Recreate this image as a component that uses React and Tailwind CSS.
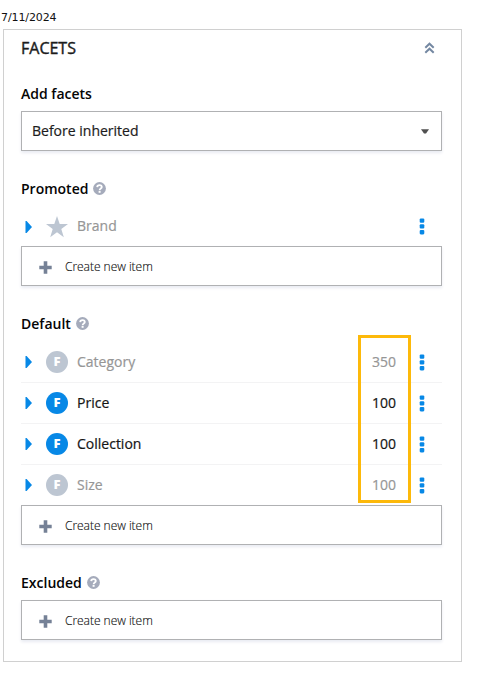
import React from "react";

function Help() {
  return (
    <svg className="mb-[2px] ml-[5px] h-[13px] w-[13px] shrink-0" viewBox="0 0 13 13">
      <circle cx="6.5" cy="6.5" r="6.4" fill="#a5abbb" />
      <path d="M4.2 5.1C4.3 2.4 8.8 2.5 8.8 5.1C8.8 6.6 6.6 6.5 6.6 8.2" fill="none" stroke="#fff" strokeWidth="1.8" />
      <rect x="5.6" y="9" width="2" height="1.8" fill="#fff" />
    </svg>
  );
}

function Heading({ children, help }) {
  return (
    <div className="flex h-5 items-center text-[14px] leading-5 font-semibold text-[#050505]">
      <span>{children}</span>
      {help && <Help />}
    </div>
  );
}

function CreateItem() {
  return (
    <div className="flex h-10 items-center border border-[#b0b1b3] pl-[17px] shadow-[0_2px_3px_#e9ebf2]">
      <svg className="mt-[3px] h-[13px] w-[13px]" viewBox="0 0 13 13">
        <path d="M6.5 0.3V12.7M0.3 6.5H12.7" stroke="#758196" strokeWidth="3.6" />
      </svg>
      <span className="mt-[2px] ml-[13px] text-[12px] font-light tracking-[-0.03px] text-[#111] [-webkit-text-stroke:0.15px_#111]">
        Create new item
      </span>
    </div>
  );
}

function Row({ name, value, muted, star, line }) {
  const tone = muted
    ? "text-[#969696] [-webkit-text-stroke:0.2px_#969696]"
    : "text-[#151515] [-webkit-text-stroke:0.2px_#151515]";
  return (
    <div className={"flex items-center " + (star ? "h-10 pt-px" : line ? "h-[41px] border-b border-[#f3f3f4]" : "h-10")}>
      <svg className="ml-1 h-3 w-[7px]" viewBox="0 0 7 12">
        <path d="M0.5 0H1.6L7 6L1.6 12H0.5Z" fill="#0788e6" />
      </svg>
      <div className="ml-[14px] flex w-[22px] justify-center">
        {star ? (
          <svg className="h-[22px] w-[22px]" viewBox="0 0 22 22">
            <path d="M11 0L13.7 8H22L15.3 13L17.8 21.3L11 16.3L4.2 21.3L6.7 13L0 8H8.3Z" fill="#bdc6d2" />
          </svg>
        ) : (
          <div className={"flex h-[22px] w-[22px] items-center justify-center rounded-full text-[13px] font-extrabold text-white " + (muted ? "bg-[#bdc6d2]" : "bg-[#0788e6]")}>
            F
          </div>
        )}
      </div>
      <span className={"mb-[2px] ml-[9px] flex-1 text-[14px] " + tone}>{name}</span>
      <span className={"mb-[2px] text-[14px] " + tone}>{value}</span>
      <svg className="mr-[17px] ml-[23px] h-[17px] w-[6px]" viewBox="0 0 6 17">
        <rect x="0.7" y="0.4" width="4.6" height="4.4" rx="1.1" fill="#0788e6" />
        <rect x="0.7" y="6.2" width="4.6" height="4.4" rx="1.1" fill="#0788e6" />
        <rect x="0.7" y="12" width="4.6" height="4.4" rx="1.1" fill="#0788e6" />
      </svg>
    </div>
  );
}

export default function App() {
  return (
    <div className="h-[682px] w-[478px] overflow-hidden bg-white font-['Open_Sans',sans-serif]">
      <div className="h-[29px] pt-[11px] pl-px font-['DejaVu_Sans',sans-serif] text-[11px] leading-[14px] tracking-[-0.1px] text-[#111]">
        7/11/2024
      </div>
      <div className="ml-[3px] h-[633px] w-[459px] border border-[#d0d0d0] pr-[19px] pl-[17px]">
        <div className="flex h-9 items-center justify-between pr-[7px]">
          <h1 className="mb-px text-[16px] text-[#1c1c1c] [-webkit-text-stroke:0.4px_#1c1c1c]">FACETS</h1>
          <svg className="h-3 w-[11px]" viewBox="0 0 11 12">
            <path d="M1.3 5.7L5.5 1.7L9.7 5.7M1.3 10.7L5.5 6.7L9.7 10.7" fill="none" stroke="#7488a2" strokeWidth="2" />
          </svg>
        </div>
        <div className="mt-[18px]">
          <Heading>Add facets</Heading>
        </div>
        <div className="mt-[7px] flex h-10 items-center justify-between border border-[#b0b1b3] pr-3 pl-[10px] shadow-[0_2px_3px_#e9ebf2]">
          <span className="mb-[2px] text-[14px] text-[#1c1c1c] [-webkit-text-stroke:0.2px_#1c1c1c]">Before inherited</span>
          <svg className="h-[5px] w-2" viewBox="0 0 8 5">
            <path d="M0 0.2H8L5 4.6H3Z" fill="#505050" />
          </svg>
        </div>
        <div className="mt-7">
          <Heading help>Promoted</Heading>
        </div>
        <div className="mt-[7px]">
          <Row name="Brand" muted star />
          <CreateItem />
        </div>
        <div className="mt-7">
          <Heading help>Default</Heading>
        </div>
        <div className="relative mt-2">
          <Row name="Category" value="350" muted line />
          <Row name="Price" value="100" line />
          <Row name="Collection" value="100" line />
          <Row name="Size" value="100" muted />
          <div className="absolute -top-[7px] left-[337px] h-[168px] w-[53px] border-3 border-[#fdb90a]" />
          <CreateItem />
        </div>
        <div className="mt-7">
          <Heading help>Excluded</Heading>
        </div>
        <div className="mt-[7px]">
          <CreateItem />
        </div>
      </div>
    </div>
  );
}
